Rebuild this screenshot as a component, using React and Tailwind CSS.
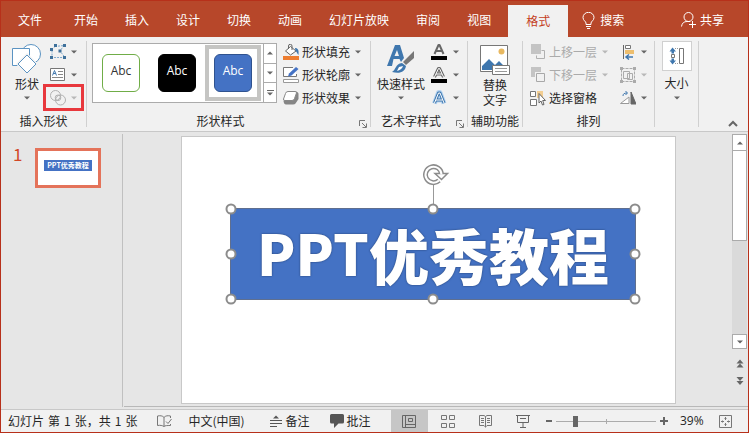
import React from 'react';
import clsx from 'clsx';

const TABS = ['开始', '插入', '设计', '切换', '动画', '幻灯片放映', '审阅', '视图'];

const SWATCHES = [
  { id: 'outline', box: 'border border-[#70AD47] bg-white text-[#333]' },
  { id: 'black', box: 'border border-black bg-black text-white' },
  { id: 'blue', box: 'border border-[#2F528F] bg-[#4472C4] text-white', active: true },
];

// Selection handles around the shape
const HANDLES = [
  'left-0 top-0',
  'left-1/2 top-0',
  'left-full top-0',
  'left-0 top-1/2',
  'left-full top-1/2',
  'left-0 top-full',
  'left-1/2 top-full',
  'left-full top-full',
];

function Caret({ muted }) {
  return (
    <svg width="6" height="4" viewBox="0 0 6 4" className="shrink-0">
      <path d="M0 0.5H6L3 3.5Z" fill={muted ? '#B8B8B8' : '#666'} />
    </svg>
  );
}

function Group({ label, launcher, className, children }) {
  return (
    <section className={clsx('flex shrink-0 flex-col pt-[3px]', className)}>
      <div className="flex h-[70px]">{children}</div>
      <div className="flex h-[21px] items-center">
        <h2 className="flex-1 text-center whitespace-nowrap">{label}</h2>
        {launcher && (
          <button type="button" aria-label={`${label}选项`} className="flex w-4 justify-end pt-[6px] pr-[3px]">
            <svg width="8" height="8" viewBox="0 0 8 8" fill="none" stroke="#777">
              <path d="M0.5 6V0.5H6M3 3L7 7M7.5 3.5V7.5H3.5" />
            </svg>
          </button>
        )}
      </div>
    </section>
  );
}

function Separator() {
  return <div className="my-1 w-px shrink-0 bg-[#D0D0D0]" />;
}

function RowButton({ icon, label, muted, className }) {
  return (
    <button
      type="button"
      aria-label={label ? undefined : '选项'}
      disabled={muted}
      className={clsx('flex h-[23px] items-center whitespace-nowrap', muted && 'text-[#ABABAB]', className)}
    >
      {icon}
      {label && <span className="ml-[3px]">{label}</span>}
      <span className="ml-[5px] flex">
        <Caret muted={muted} />
      </span>
    </button>
  );
}

function ShapesIcon() {
  return (
    <svg width="30" height="30" viewBox="0 0 30 30" fill="#fff" stroke="#5B93C2">
      <circle cx="19" cy="10" r="9.5" />
      <path d="M0.5 4.5H17.5V21.5H0.5Z" />
      <path d="M15 11L24 20L15 29L6 20Z" stroke="#F1F1F1" strokeWidth="3" />
      <path d="M15 11L24 20L15 29L6 20Z" />
    </svg>
  );
}

function EditShapeIcon() {
  return (
    <svg width="16" height="15" viewBox="0 0 16 15" fill="none" stroke="#7FA9CC">
      <path d="M5 2.5L14 1.5L10 7L15 13.5H2V5Z" strokeDasharray="2 1" />
      <path d="M4 0H7V3H4ZM13 0H16V3H13ZM0 4H3V7H0ZM8.5 5.5H11.5V8.5H8.5ZM0 12H3V15H0ZM13 12H16V15H13Z" fill="#3F719B" stroke="none" />
    </svg>
  );
}

function TextBoxIcon() {
  return (
    <svg width="16" height="13" viewBox="0 0 16 13" fill="none" stroke="#777">
      <path d="M0.5 0.5H14.5V12.5H0.5Z" fill="#fff" />
      <path d="M2.5 7.5L4.5 2.5L6.5 7.5M3.2 5.5H5.8" stroke="#3F77AE" />
      <path d="M8 3.5H13M8 6.5H13M2 9.5H13" stroke="#888" />
    </svg>
  );
}

function MergeShapesIcon() {
  return (
    <svg width="16" height="16" viewBox="0 0 16 16" fill="none" stroke="#B0B0B0">
      <circle cx="5.5" cy="5.5" r="5" />
      <circle cx="10.5" cy="10" r="5" />
      <circle cx="8" cy="7.8" r="2.8" />
    </svg>
  );
}

function FillIcon() {
  return (
    <svg width="16" height="16" viewBox="0 0 16 16" fill="none">
      <path d="M0 12H16V16H0Z" fill="#ED7D31" />
      <path d="M7.5 2.5L13 7L7.5 11L2.5 7Z" fill="#fff" stroke="#666" />
      <path d="M5.5 5V2A1.7 1.7 0 0 1 9 2V6" stroke="#666" />
      <path d="M12 4C15 4 16 6 15.5 11C14 9.5 14 8 12.5 7Z" fill="#3F77AE" />
    </svg>
  );
}

function OutlineIcon() {
  return (
    <svg width="16" height="16" viewBox="0 0 16 16" fill="none">
      <path d="M10 0.5H0.5V9.5H13.5V7" fill="#fff" stroke="#777" />
      <path d="M5 9.5L6 6.5L13 0L15.5 2L8.5 8.5Z" fill="#4472C4" />
      <path d="M0.5 12.5H15.5V15.5H0.5Z" fill="#fff" stroke="#999" />
    </svg>
  );
}

function EffectIcon() {
  return (
    <svg width="16" height="14" viewBox="0 0 16 14">
      <path d="M12 0.5Q15.5 0.5 15.5 3V8L12.5 12.5Q12 13.5 10 13.5H3Q1 13.5 0.5 10Z" fill="#858585" />
      <path d="M5 0.5H12Q14 0.5 13.5 2L11.5 7.5Q11 9.5 9 9.5H2Q0 9.5 0.5 8L2.5 2.5Q3 0.5 5 0.5Z" fill="#fff" stroke="#888" />
    </svg>
  );
}

function QuickStyleIcon() {
  return (
    <svg width="28" height="30" viewBox="0 0 28 30">
      <path fillRule="evenodd" d="M8 1H13L17 14L14 18L12.5 15H6.5L5 22H0ZM10 6L7.5 12H12Z" fill="#3F77AE" />
      <path d="M27 7V14L19 21L16 18Z" fill="#777" />
      <path d="M15 19L19 22C18 28 13 30 5 28C9 26 8 20 15 19Z" fill="#3F77AE" />
      <path d="M12 23L16 22C15 25 13 26 10 27Z" fill="#fff" />
    </svg>
  );
}

function LetterIcon({ kind }) {
  return (
    <svg width="18" height="16" viewBox="0 0 18 16" fill="none" strokeLinejoin="round">
      {kind === 'glow' && <path d="M4.5 13.5L8.5 2.5H10L14 13.5M6 10H12.5" stroke="#B5D3F0" strokeWidth="5" />}
      {kind === 'fill' && <path d="M4.5 10L8.5 1H9.5L13.5 10M6 7H12" stroke="#666" strokeWidth="2" />}
      {kind === 'outline' && (
        <>
          <path d="M4.5 10L8.5 1.5H9.5L13.5 10M6 7H12" stroke="#666" strokeWidth="3" />
          <path d="M4.5 10L8.5 1.5H9.5L13.5 10M6 7H12" stroke="#fff" />
        </>
      )}
      {kind === 'glow' && (
        <>
          <path d="M4.5 13L8.5 3H10L14 13M6 10H12.5" stroke="#3F77AE" strokeWidth="3" />
          <path d="M4.5 13L8.5 3H10L14 13M6 10H12.5" stroke="#fff" />
        </>
      )}
      {kind !== 'glow' && <path d="M1 12H17V16H1Z" fill="#000" />}
    </svg>
  );
}

function AltTextIcon() {
  return (
    <svg width="30" height="30" viewBox="0 0 30 30" fill="none">
      <path d="M0.5 0.5H27.5V26.5H0.5Z" fill="#fff" stroke="#777" />
      <circle cx="21.5" cy="6.5" r="3" fill="#E8B860" />
      <path d="M2 25V21L9 14L15 20L19 16L24 21V25Z" fill="#3F77AE" />
      <path d="M12.5 20.5H29.5V29.5H12.5Z" fill="#fff" stroke="#777" />
      <path d="M15 23.5H27M15 26.5H27" stroke="#999" />
    </svg>
  );
}

function ForwardIcon() {
  return (
    <svg width="16" height="15" viewBox="0 0 16 15" fill="none">
      <path d="M11.5 6.5H14.5V14.5H6.5V11.5" stroke="#B0B0B0" />
      <path d="M1 0H11V10H1Z" fill="#C4C4C4" />
    </svg>
  );
}

function BackwardIcon() {
  return (
    <svg width="16" height="15" viewBox="0 0 16 15" fill="none">
      <path d="M1 0H11V5H5V10H1Z" fill="#C4C4C4" />
      <path d="M6.5 6.5H14.5V14.5H6.5Z" stroke="#A8A8A8" />
    </svg>
  );
}

function SelectionIcon() {
  return (
    <svg width="16" height="16" viewBox="0 0 16 16" fill="none">
      <path d="M0.5 1.5H5.5V6.5H0.5ZM0.5 9.5H6.5V15.5H0.5Z" fill="#fff" stroke="#777" />
      <path d="M7 1H13V8H7Z" fill="#F3CE92" />
      <path d="M9 3.5V13L11 11L12.5 15L14 14.5L12.7 10.5H15.5Z" fill="#fff" stroke="#666" />
    </svg>
  );
}

function AlignIcon() {
  return (
    <svg width="16" height="16" viewBox="0 0 16 16" fill="none">
      <path d="M3.5 1V15" stroke="#666" />
      <path d="M5.5 1.5H10.5V4.5H5.5Z" fill="#fff" stroke="#777" />
      <path d="M5 6H14V10H5Z" fill="#EDBE6E" />
      <path d="M13 13H6M9 10.5L6 13L9 15.5" stroke="#3F77AE" strokeWidth="1.5" />
    </svg>
  );
}

function GroupIcon() {
  return (
    <svg width="16" height="16" viewBox="0 0 16 16" fill="none" stroke="#ABABAB">
      <path d="M1.5 1.5H14.5V14.5H1.5Z" strokeDasharray="3 1" />
      <path d="M3.5 4.5H9.5V11.5H3.5ZM7.5 6.5H12.5V12.5H7.5Z" />
      <path d="M0 0H3V3H0ZM13 0H16V3H13ZM0 13H3V16H0ZM13 13H16V16H13Z" fill="#ABABAB" stroke="none" />
    </svg>
  );
}

function RotateIcon() {
  return (
    <svg width="16" height="14" viewBox="0 0 16 14" fill="none">
      <path d="M9 6V12.5H0.5Z" fill="#fff" stroke="#999" />
      <path d="M11 1V13H16Z" fill="#666" stroke="#666" />
      <path d="M3 5C3 3 4 2 7 2M5.5 0L7.5 2L5.5 4" stroke="#3F77AE" />
    </svg>
  );
}

function SizeIcon() {
  return (
    <svg width="16" height="18" viewBox="0 0 16 18" fill="none">
      <path d="M3.5 0.5L7 4.5H5V6.5H2.5V4.5H0.5ZM3.5 17.5L7 13.5H5V11.5H2.5V13.5H0.5Z" fill="#3F77AE" />
      <path d="M2.5 7.5H5.5V10.5H2.5Z" fill="#fff" stroke="#777" />
      <path d="M10.5 1.5H14.5V16.5H10.5Z" stroke="#777" />
      <path d="M6 1.5H10M6 16.5H10" stroke="#999" strokeDasharray="1 1" />
    </svg>
  );
}

function TitleBar() {
  return (
    <header className="flex h-9 items-center bg-[#B7472A] pt-[2px] pl-[17px] text-white">
      <button type="button" className="mr-8">文件</button>
      <nav className="flex h-full items-center gap-[27px]">
        {TABS.map((tab) => (
          <button type="button" key={tab} className="whitespace-nowrap">{tab}</button>
        ))}
      </nav>
      <button type="button" className="ml-[17px] h-8 w-[60px] self-end bg-[#F1F1F1] text-[#C43E1C]">格式</button>
      <button type="button" className="ml-[14px] flex items-center gap-[5px]">
        <svg width="13" height="17" viewBox="0 0 13 17" fill="none" stroke="#fff">
          <path d="M4 12.5V11C4 9.5 1 8.5 1 5.5A5.3 5 0 0 1 12 5.5C12 8.5 9 9.5 9 11V12.5ZM4 14.5H9M5 16.5H8" />
        </svg>
        搜索
      </button>
      <button type="button" className="mr-6 ml-auto flex items-center gap-[3px]">
        <svg width="16" height="16" viewBox="0 0 16 16" fill="none" stroke="#fff">
          <circle cx="7.5" cy="5" r="4.5" />
          <path d="M0.5 14.5C1 11 3 9.5 6 9.5H9M8 12.5H15M11.5 9V16" />
        </svg>
        共享
      </button>
    </header>
  );
}

function Ribbon() {
  return (
    <div className="flex h-[95px] border-b border-[#C8C8C8] bg-[#F1F1F1]">
      <Group label="插入形状" className="w-[85px]">
        <button type="button" className="flex w-[42px] flex-col items-center pt-1 pl-[10px]">
          <ShapesIcon />
          <span className="mt-[2px] mb-1 whitespace-nowrap">形状</span>
          <Caret />
        </button>
        <div className="ml-[7px] flex flex-col">
          <RowButton icon={<EditShapeIcon />} />
          <RowButton icon={<TextBoxIcon />} />
          <div className="relative">
            <RowButton icon={<MergeShapesIcon />} muted />
            <span className="pointer-events-none absolute -inset-x-[7px] -top-[2px] -bottom-[2px] border-3 border-[#E8383D]" />
          </div>
        </div>
      </Group>
      <Separator />

      <Group label="形状样式" launcher className="w-[283px]">
        <div className="mt-[3px] ml-[5px] flex h-[60px] border border-[#ABABAB] bg-white">
          {SWATCHES.map((s) => (
            <button
              type="button"
              key={s.id}
              className={clsx('my-px flex w-14 items-center justify-center border-4', s.active ? 'border-[#C5C5C3]' : 'border-transparent')}
            >
              <span className={clsx('flex size-[38px] items-center justify-center rounded-md pb-1 font-[Open_Sans,sans-serif] text-xs', s.box)}>
                Abc
              </span>
            </button>
          ))}
          <div className="ml-[2px] flex w-[13px] flex-col divide-y divide-[#ABABAB] border-l border-[#ABABAB]">
            <button type="button" aria-label="上一行" className="flex flex-1 items-center justify-center">
              <span className="rotate-180"><Caret /></span>
            </button>
            <button type="button" aria-label="下一行" className="flex flex-1 items-center justify-center"><Caret /></button>
            <button type="button" aria-label="其他" className="flex flex-1 flex-col items-center justify-center gap-px">
              <span className="h-px w-[7px] bg-[#666]" />
              <Caret />
            </button>
          </div>
        </div>
        <div className="ml-[6px] flex flex-col">
          <RowButton icon={<FillIcon />} label="形状填充" />
          <RowButton icon={<OutlineIcon />} label="形状轮廓" />
          <RowButton icon={<EffectIcon />} label="形状效果" />
        </div>
      </Group>
      <Separator />

      <Group label="艺术字样式" launcher className="w-[96px]">
        <button type="button" className="ml-[6px] flex w-12 flex-col items-center pt-1">
          <QuickStyleIcon />
          <span className="mt-[2px] mb-1 whitespace-nowrap">快速样式</span>
          <Caret />
        </button>
        <div className="ml-[5px] flex flex-col">
          <RowButton icon={<LetterIcon kind="fill" />} />
          <RowButton icon={<LetterIcon kind="outline" />} />
          <RowButton icon={<LetterIcon kind="glow" />} />
        </div>
      </Group>
      <Separator />

      <Group label="辅助功能" className="w-[54px]">
        <button type="button" className="flex w-full flex-col items-center pt-[5px] leading-[15px]">
          <AltTextIcon />
          <span className="mt-[2px] w-6">替换文字</span>
        </button>
      </Group>
      <Separator />

      <Group label="排列" className="w-[131px]">
        <div className="ml-[7px] flex flex-col">
          <RowButton icon={<ForwardIcon />} label="上移一层" muted />
          <RowButton icon={<BackwardIcon />} label="下移一层" muted />
          <button type="button" className="flex h-[23px] items-center gap-[3px] whitespace-nowrap">
            <SelectionIcon />
            选择窗格
          </button>
        </div>
        <div className="ml-3 flex flex-col">
          <RowButton icon={<AlignIcon />} />
          <RowButton icon={<GroupIcon />} muted />
          <RowButton icon={<RotateIcon />} />
        </div>
      </Group>
      <Separator />

      <Group label="" className="w-[43px]">
        <button type="button" className="flex w-full flex-col items-center">
          <span className="mt-px flex h-[30px] w-[30px] items-center justify-center border border-[#D0D0D0] bg-white">
            <SizeIcon />
          </span>
          <span className="mt-1 mb-[5px] whitespace-nowrap">大小</span>
          <Caret />
        </button>
      </Group>
      <Separator />

      <button type="button" aria-label="折叠功能区" className="mr-[10px] mb-1 ml-auto self-end">
        <svg width="10" height="7" viewBox="0 0 10 7" fill="none" stroke="#666" strokeWidth="2">
          <path d="M1 6L5 2L9 6" />
        </svg>
      </button>
    </div>
  );
}

function SelectedShape() {
  return (
    <div className="relative flex h-[92px] items-center justify-center border border-[#5F6F8F] bg-[#4472C4] font-black whitespace-nowrap text-white [text-shadow:0_0_2px_#1F3864]">
      <span className="pb-1 text-[56px] leading-none">PPT</span>
      <span className="text-[60px] leading-none">优秀教程</span>
      <span className="absolute -top-7 left-1/2 h-7 w-px bg-[#999]" />
      <svg width="28" height="24" viewBox="0 0 28 24" fill="none" className="absolute -top-[46px] left-1/2 -ml-[11px]">
        <path d="M17 17.5A8 8 0 1 1 19.5 11" stroke="#8C8C8C" strokeWidth="5" />
        <path d="M13 10.5H25.5L19.5 16.5Z" fill="#fff" stroke="#8C8C8C" strokeWidth="1.5" />
        <path d="M17 17.5A8 8 0 1 1 19.5 11.5" stroke="#fff" strokeWidth="2" />
      </svg>
      {HANDLES.map((pos) => (
        <span key={pos} className={clsx('absolute size-[11px] -translate-1/2 rounded-full border-2 border-[#8C8C8C] bg-white', pos)} />
      ))}
    </div>
  );
}

function ScrollBar() {
  return (
    <div className="mr-px flex w-[15px] flex-col items-center">
      <div className="flex w-full flex-1 flex-col bg-[#DADADA]">
        <button type="button" aria-label="向上滚动" className="flex h-4 items-center justify-center border border-b-0 border-[#ABABAB] bg-white">
          <span className="rotate-180"><Caret /></span>
        </button>
        <div className="h-[91px] border border-[#ABABAB] bg-white" />
        <button type="button" aria-label="向下滚动" className="mt-auto flex h-[15px] items-center justify-center border border-[#ABABAB] bg-white"><Caret /></button>
      </div>
      <button type="button" aria-label="上一张幻灯片" className="mt-[5px] h-[18px]">
        <svg width="8" height="9" viewBox="0 0 8 9" fill="#666"><path d="M0.5 4.5H7.5L4 0.5ZM0.5 8.5H7.5L4 4.5Z" /></svg>
      </button>
      <button type="button" aria-label="下一张幻灯片" className="mb-4 h-[18px]">
        <svg width="8" height="9" viewBox="0 0 8 9" fill="#666"><path d="M0.5 0H7.5L4 4ZM0.5 4H7.5L4 8Z" /></svg>
      </button>
    </div>
  );
}

function Workspace() {
  return (
    <main className="flex flex-1 bg-[#E6E6E6] pt-[2px]">
      <aside className="flex w-[122px] shrink-0 items-start border-r border-[#C0C0C0] pt-[14px] pl-[12px]">
        <span className="w-[22px] text-[17px] leading-3 text-[#D24726]">1</span>
        <button type="button" className="flex h-10 w-[66px] items-start justify-center border-3 border-[#E4735A] bg-white pt-[9px]">
          <span className="h-[11px] w-12 bg-[#4472C4] text-center text-[7px] leading-[11px] font-bold whitespace-nowrap text-white">PPT优秀教程</span>
        </button>
      </aside>
      <div className="ml-px flex flex-1 border-b border-[#B8B8B8]">
        <div className="flex flex-1 pt-[2px] pr-14 pb-[2px] pl-[57px]">
          <div className="flex-1 border border-[#C8C8C8] bg-white pt-[71px] pr-[39px] pl-12">
            <SelectedShape />
          </div>
        </div>
        <ScrollBar />
      </div>
    </main>
  );
}

function StatusBar() {
  return (
    <footer className="mt-[2px] flex h-[23px] items-center border-t border-[#C8C8C8] bg-[#F1F1F1] pl-[7px] whitespace-nowrap">
      <p className="flex gap-1">
        <span>幻灯片</span>
        <span>第</span>
        <span>1</span>
        <span>张，共</span>
        <span>1</span>
        <span>张</span>
      </p>
      <button type="button" aria-label="拼写检查" className="ml-5">
        <svg width="15" height="13" viewBox="0 0 15 13" fill="none" stroke="#777">
          <path d="M7 2.5V11.5M7 2.5C5.5 0.5 3 0.5 0.5 1V10.5C3 10 5.5 10.5 7 11.5C8 10.5 10 10.5 13.5 10.5V9M7 2.5C8.5 0.5 11 0.5 13.5 1V3M9 6.5L11 8.5L14.5 4" />
        </svg>
      </button>
      <button type="button" className="ml-4">中文(中国)</button>
      <button type="button" className="ml-[25px] flex items-center gap-1">
        <svg width="12" height="12" viewBox="0 0 12 12" stroke="#555">
          <path d="M3 3.5L6 0.5L9 3.5Z" fill="#555" stroke="none" />
          <path d="M0 5.5H12M0 8.5H12M0 11.5H7" />
        </svg>
        备注
      </button>
      <button type="button" className="ml-5 flex items-center gap-[3px]">
        <svg width="14" height="14" viewBox="0 0 14 14" fill="#555">
          <path d="M1.5 0H12.5Q14 0 14 1.5V8Q14 9.5 12.5 9.5H8.5L4 14V9.5H1.5Q0 9.5 0 8V1.5Q0 0 1.5 0Z" />
        </svg>
        批注
      </button>
      <div className="ml-auto flex h-full items-center">
        <button type="button" aria-label="普通视图" className="flex h-full w-[37px] items-center justify-center bg-[#C6C6C6]">
          <svg width="15" height="13" viewBox="0 0 15 13" fill="none" stroke="#666">
            <path d="M0.5 0.5H13.5V12.5H0.5ZM3.5 0.5V12.5M3.5 9.5H13.5M6.5 3.5H10.5V6.5H6.5Z" />
          </svg>
        </button>
        <button type="button" aria-label="幻灯片浏览" className="ml-[13px]">
          <svg width="14" height="13" viewBox="0 0 14 13" fill="none" stroke="#777">
            <path d="M0.5 0.5H5.5V4.5H0.5ZM8.5 0.5H13.5V4.5H8.5ZM0.5 8.5H5.5V12.5H0.5ZM8.5 8.5H13.5V12.5H8.5Z" />
          </svg>
        </button>
        <button type="button" aria-label="阅读视图" className="ml-6">
          <svg width="13" height="13" viewBox="0 0 13 13" fill="none" stroke="#777">
            <path d="M6.5 1.5V12.5M6.5 1.5L5 0.5H0.5V10.5H5L6.5 12L8 10.5H12.5V0.5H8ZM2 3.5H5M2 5.5H5M2 7.5H5M8 3.5H11M8 5.5H11M8 7.5H11" />
          </svg>
        </button>
        <button type="button" aria-label="幻灯片放映" className="ml-6">
          <svg width="14" height="13" viewBox="0 0 14 13" fill="none" stroke="#666">
            <path d="M0 0.5H14M1.5 0.5V7.5H12.5V0.5M4 3.5H10M7 7.5V12M4 12.5H10" />
          </svg>
        </button>
        <button type="button" aria-label="缩小" className="ml-4 flex">
          <span className="h-[2px] w-[6px] bg-[#666]" />
        </button>
        <div className="relative mx-1 flex h-4 w-[100px] items-center">
          <span className="absolute inset-x-0 top-1/2 h-px bg-[#ABABAB]" />
          <span className="absolute top-[6px] left-1/2 h-[5px] w-px bg-[#ABABAB]" />
          <input
            type="range"
            aria-label="缩放"
            min="10"
            max="200"
            defaultValue="45"
            className="relative h-4 w-full appearance-none bg-transparent [&::-webkit-slider-thumb]:h-[11px] [&::-webkit-slider-thumb]:w-[5px] [&::-webkit-slider-thumb]:appearance-none [&::-webkit-slider-thumb]:bg-[#666]"
          />
        </div>
        <button type="button" aria-label="放大">
          <svg width="8" height="8" viewBox="0 0 8 8" stroke="#666" strokeWidth="2"><path d="M0 4H8M4 0V8" /></svg>
        </button>
        <span className="ml-3 w-[27px] font-[Open_Sans,sans-serif]">39%</span>
        <button type="button" aria-label="适应窗口" className="mr-4 ml-3">
          <svg width="13" height="13" viewBox="0 0 13 13" fill="none" stroke="#777">
            <path d="M0.5 0.5H12.5V12.5H0.5Z" />
            <path d="M6.5 2V5M6.5 8V11M2 6.5H5M8 6.5H11M5.5 3.5H7.5M5.5 9.5H7.5M3.5 5.5V7.5M9.5 5.5V7.5" />
          </svg>
        </button>
      </div>
    </footer>
  );
}

export default function App() {
  return (
    <div className="flex min-h-screen flex-col border border-[#B7301A] bg-[#E6E6E6] font-['Noto_Sans_CJK_SC',sans-serif] text-xs leading-4 text-[#262626] [&_svg]:block [&_svg]:shrink-0">
      <TitleBar />
      <Ribbon />
      <Workspace />
      <StatusBar />
    </div>
  );
}
